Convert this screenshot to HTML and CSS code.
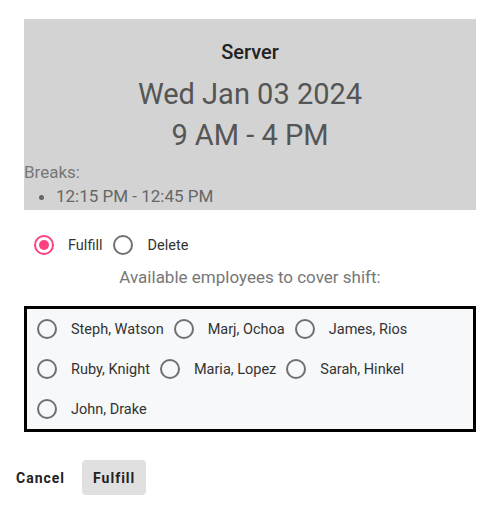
FILE: index.html
```html
<!DOCTYPE html>
<html>
<head>
<meta charset="utf-8">
<link rel="stylesheet" href="styles.css">
</head>
<body>
<div class="dialog">
  <div class="shift">
    <div class="role">Server</div>
    <div class="date">Wed Jan 03 2024</div>
    <div class="date">9 AM - 4 PM</div>
    <div class="breaks">Breaks:</div>
    <ul class="break-list"><li>12:15 PM - 12:45 PM</li></ul>
  </div>
  <div class="mode">
    <label class="opt"><span class="radio on"></span><span class="lbl">Fulfill</span></label>
    <label class="opt"><span class="radio"></span><span class="lbl">Delete</span></label>
  </div>
  <div class="avail">Available employees to cover shift:</div>
  <div class="emps">
    <label class="opt emp"><span class="radio"></span><span class="lbl">Steph, Watson</span></label>
    <label class="opt emp"><span class="radio"></span><span class="lbl">Marj, Ochoa</span></label>
    <label class="opt emp"><span class="radio"></span><span class="lbl">James, Rios</span></label>
    <label class="opt emp"><span class="radio"></span><span class="lbl">Ruby, Knight</span></label>
    <label class="opt emp"><span class="radio"></span><span class="lbl">Maria, Lopez</span></label>
    <label class="opt emp"><span class="radio"></span><span class="lbl">Sarah, Hinkel</span></label>
    <label class="opt emp"><span class="radio"></span><span class="lbl">John, Drake</span></label>
  </div>
  <div class="actions">
    <button class="btn">Cancel</button>
    <button class="btn primary">Fulfill</button>
  </div>
</div>
</body>
</html>
```
FILE: styles.css
```css
html, body { margin: 0; padding: 0; background: #fff; }
body { font-family: Roboto, "Noto Sans", sans-serif; color: #333; }
.dialog { padding: 19px 21px 0 24px; }
.shift { background: #d3d3d3; height: 191px; box-sizing: border-box; padding-top: 21px; }
.role { text-align: center; font-size: 20px; font-weight: 500; line-height: 24px; color: #222; }
.date { text-align: center; font-size: 29px; font-weight: 400; line-height: 41px; color: #555; }
.role + .date { margin-top: 10px; }
.breaks { font-size: 17px; line-height: 24px; color: #777; margin-top: 4px; }
.break-list { margin: 0; padding-left: 32px; font-size: 17px; line-height: 24px; color: #666; }
.break-list li::marker { color: #666; }
.mode { display: flex; padding-left: 10px; margin-top: 25px; height: 20px; align-items: center; }
.opt { display: flex; align-items: center; font-size: 14.5px; color: #333; }
.opt .lbl { margin-left: 14px; margin-right: 11px; }
.radio { width: 20px; height: 20px; box-sizing: border-box; border: 2px solid #707070; border-radius: 50%; display: flex; align-items: center; justify-content: center; flex: none; }
.radio.on { border-color: #ff4081; }
.radio.on::after { content: ""; width: 10px; height: 10px; border-radius: 50%; background: #ff4081; }
.avail { text-align: center; font-size: 17px; line-height: 24px; color: #777; margin-top: 10px; }
.emps { margin-top: 17px; border: 3px solid #000; background: #f7f8fa; display: flex; flex-wrap: wrap; padding: 0 10px; height: 126px; box-sizing: border-box; align-content: flex-start; }
.emp { height: 40px; }
.emp .lbl { margin-right: 10px; }
.actions { display: flex; align-items: center; margin-left: -24px; padding-left: 8px; margin-top: 28px; gap: 9px; }
.btn { font-family: Roboto, sans-serif; font-size: 14px; font-weight: 700; letter-spacing: 1px; color: #222; background: transparent; border: 0; border-radius: 4px; height: 35px; padding: 0 8px; }
.btn.primary { background: #e0e0e0; padding: 0 11px; }
```
